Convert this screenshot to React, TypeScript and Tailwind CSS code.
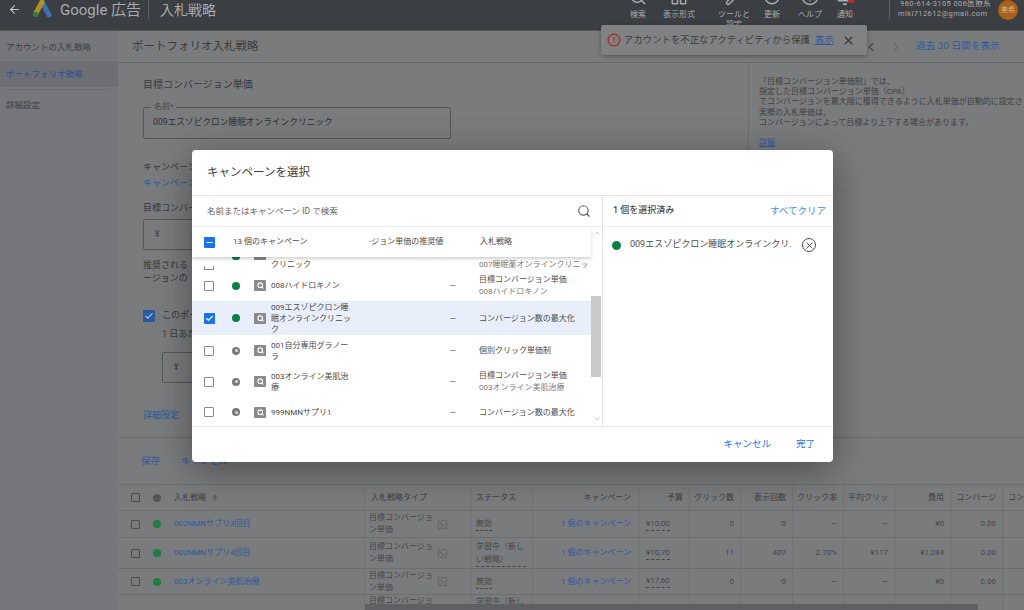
import React from 'react';
import { ArrowLeft, ArrowUp, ChevronLeft, ChevronRight, CircleAlert, CircleHelp, Bell, RotateCw, Search, Wrench, X, Check, Minus, ImageOff, LayoutPanelTop, ChevronUp, ChevronDown } from 'lucide-react';

const tableCols = 'grid grid-cols-[247px_106px_62px_106px_51px_51px_52px_51px_51px_56px_52px_21px]';
const cell = 'border-r border-[#707173] flex items-center';
const numCell = cell + ' justify-end pr-[6px]';

const headerItems = [
  { label: '検索', icon: <Search size={18} />, w: 'w-[36px]' },
  { label: '表示形式', icon: <LayoutPanelTop size={18} />, w: 'w-[46px]' },
  { label: 'ツールと設定', icon: <Wrench size={18} />, w: 'w-[36px] ml-[14px]' },
  { label: '更新', icon: <RotateCw size={18} />, w: 'w-[36px] ml-[2px]' },
  { label: 'ヘルプ', icon: <CircleHelp size={18} />, w: 'w-[40px]' },
  { label: '通知', icon: <Bell size={18} />, w: 'w-[30px]', badge: true },
];

const bidRows = [
  { name: '002NMNサプリ3回目', status: '無効', budget: '¥10,00', clicks: '0', imp: '0', ctr: '—', avg: '—', cost: '¥0', h: 'h-[27px]' },
  { name: '002NMNサプリ4回目', status: '学習中（新しい戦略）', budget: '¥10,70', clicks: '11', imp: '407', ctr: '2.70%', avg: '¥117', cost: '¥1,284', h: 'h-[31px]' },
  { name: '003オンライン美肌治療', status: '無効', budget: '¥17,60', clicks: '0', imp: '0', ctr: '—', avg: '—', cost: '¥0', h: 'h-[26px]' },
];

const campaignRows = [
  { name: '008ハイドロキノン', strategy: '目標コンバージョン単価', sub: '008ハイドロキノン', live: true, h: 'h-[31px]' },
  { name: '009エスゾピクロン睡眠オンラインクリニック', strategy: 'コンバージョン数の最大化', selected: true, live: true, h: 'h-[34px]' },
  { name: '001自分専用グラノーラ', strategy: '個別クリック単価制', live: false, h: 'h-[31px]' },
  { name: '003オンライン美肌治療', strategy: '目標コンバージョン単価', sub: '003オンライン美肌治療', live: false, h: 'h-[31px]' },
  { name: '999NMNサプリ1', strategy: 'コンバージョン数の最大化', live: false, h: 'h-[30px]' },
];

const StatusDot = ({ live }: { live: boolean }) =>
  live ? (
    <span className="block w-[8px] h-[8px] rounded-full bg-[#0b8043] shrink-0" />
  ) : (
    <span className="w-[8px] h-[8px] rounded-full bg-[#7a7a7a] shrink-0 flex items-center justify-center">
      <span className="w-[3px] h-[3px] rounded-full bg-[#d8d8d8]" />
    </span>
  );

const SearchBadge = () => (
  <span className="w-[12px] h-[11px] rounded-[1px] bg-[#8a8a8a] flex items-center justify-center shrink-0">
    <Search size={7} strokeWidth={3.5} className="text-white" />
  </span>
);

const CampaignRow = ({ row }: { row: (typeof campaignRows)[number] }) => (
  <div className={`${row.h} shrink-0 w-[399px] flex items-center text-[8px] leading-[11px] text-[#4a4a4a] ${row.selected ? 'bg-[#e8eefa]' : ''}`}>
    <div className="w-[34px] pl-[12px] shrink-0">
      {row.selected ? (
        <span className="w-[11px] h-[11px] rounded-[1px] bg-[#1a73e8] flex items-center justify-center">
          <Check size={9} strokeWidth={3} className="text-white" />
        </span>
      ) : (
        <span className="block w-[10px] h-[10px] rounded-[1px] border border-[#8a8a8a]" />
      )}
    </div>
    <div className="w-[28px] pl-[6px] shrink-0"><StatusDot live={row.live} /></div>
    <SearchBadge />
    <div className="w-[82px] ml-[5px] shrink-0">{row.name}</div>
    <div className="w-[126px] pr-[23px] shrink-0 text-right">—</div>
    <div className="flex-1 whitespace-nowrap">
      <div>{row.strategy}</div>
      {row.sub && <div className="text-[#7a7a7a] mt-[1px]">{row.sub}</div>}
    </div>
  </div>
);

const App: React.FC = () => {
  return (
    <div className="relative w-[1024px] h-[610px] overflow-hidden flex flex-col bg-[#7a7b7d] text-[#38393b] [font-family:Roboto,'Noto_Sans_CJK_JP',sans-serif]">
      {/* top bar */}
      <header className="h-[31px] shrink-0 bg-[#3b3e43] border-b border-[#55575a] flex items-start overflow-hidden text-[#a9abae]">
        <ArrowLeft size={13} className="ml-[8px] mt-[3px] text-[#c4c5c7]" />
        <svg width="20" height="18" viewBox="0 0 20 18" className="ml-[11px] mt-0">
          <path d="M10 2 L17 15" stroke="#3f6fb0" strokeWidth="5" strokeLinecap="round" />
          <path d="M10 2 L4 13" stroke="#b08f24" strokeWidth="5" strokeLinecap="round" />
          <circle cx="3.5" cy="14.5" r="2.8" fill="#2f7d45" />
        </svg>
        <span className="ml-[8px] mt-[1px] text-[15px] leading-[18px] whitespace-nowrap">Google 広告</span>
        <span className="ml-[7px] w-px h-[20px] bg-[#5c5e62]" />
        <span className="ml-[11px] mt-[1px] text-[14px] leading-[18px] whitespace-nowrap">入札戦略</span>
        <div className="ml-[404px] flex items-start">
          {headerItems.map((item) => (
            <div key={item.label} className={`${item.w} relative flex flex-col items-center text-center text-[8px] leading-[10px]`}>
              <span className="-mt-[12px] mb-[4px] text-[#a9abae]">{item.icon}</span>
              <span>{item.label}</span>
              {item.badge && <span className="absolute top-0 left-[18px] w-[7px] h-[3px] rounded-b-full bg-[#a8322c]" />}
            </div>
          ))}
        </div>
        <span className="ml-[29px] w-px h-[20px] bg-[#5c5e62]" />
        <div className="ml-[8px] mt-[-1px] text-[7.5px] leading-[10px] tracking-[0.4px] whitespace-nowrap">
          <div className="ml-[2px]">960-614-3105 006医療系</div>
          <div>miki712612@gmail.com</div>
        </div>
        <span className="ml-[7px] w-[20px] h-[20px] rounded-full bg-[#a8621c] text-[#d8b894] text-[7px] flex items-center justify-center shrink-0">美希</span>
      </header>

      <div className="flex flex-1 min-h-0">
        {/* side nav */}
        <aside className="w-[118px] shrink-0 bg-[#75777b] text-[8.5px] pt-[7px]">
          <div className="h-[19px] pl-[6px] flex items-center text-[#3f4042] whitespace-nowrap">アカウントの入札戦略</div>
          <div className="h-[26px] mt-[4px] pl-[6px] flex items-center bg-[#6d6f74] text-[#2a4f8f] whitespace-nowrap">ポートフォリオ戦略</div>
          <div className="mx-[8px] mt-[2px] h-px bg-[#6d6f72]" />
          <div className="h-[30px] pl-[6px] flex items-center text-[#3f4042]">詳細設定</div>
        </aside>

        {/* main */}
        <main className="flex-1 min-w-0 flex flex-col">
          <div className="h-[32px] shrink-0 border-b border-[#66676a] pl-[14px] flex items-center justify-between">
            <span className="text-[11.5px] text-[#3a3b3d] whitespace-nowrap">ポートフォリオ入札戦略</span>
            <div className="flex items-center text-[#45464a] pr-[24px]">
              <ChevronLeft size={14} />
              <ChevronRight size={14} className="ml-[11px] text-[#66686b]" />
              <span className="ml-[13px] text-[9.5px] tracking-[0.2px] text-[#2b5aa0] whitespace-nowrap">過去 30 日間を表示</span>
            </div>
          </div>

          <div className="h-[375px] shrink-0 flex border-b border-[#6c6d70]">
            <div className="w-[630px] shrink-0 pl-[25px] pt-[15px] text-[9px] overflow-hidden">
              <div className="text-[10px] leading-[14px] whitespace-nowrap">目標コンバージョン単価</div>
              <div className="relative mt-[15px] w-[308px] h-[32px] rounded-[2px] border border-[#55565a] flex items-center pl-[9px] text-[8.7px] text-[#2e2f31] whitespace-nowrap">
                009エスゾピクロン睡眠オンラインクリニック
                <span className="absolute -top-[6px] left-[7px] px-[3px] bg-[#7a7b7d] text-[8px] leading-[10px] text-[#48494b]">名前*</span>
              </div>
              <div className="mt-[20px] leading-[16px] whitespace-nowrap">キャンペーン</div>
              <div className="text-[#2b5aa0] leading-[16px] whitespace-nowrap">キャンペーン</div>
              <div className="mt-[10px] leading-[14px] whitespace-nowrap">目標コンバー</div>
              <div className="mt-[4px] w-[120px] h-[31px] rounded-[2px] border border-[#55565a] flex items-center pl-[11px] text-[8.5px]">¥</div>
              <div className="mt-[9px] leading-[13px] whitespace-nowrap">
                <div>推奨される</div>
                <div>ージョンの</div>
              </div>
              <div className="mt-[24px] flex items-center">
                <span className="w-[12px] h-[12px] bg-[#2b5aa0] flex items-center justify-center">
                  <Check size={10} strokeWidth={2.5} className="text-[#c4d2e8]" />
                </span>
                <span className="ml-[7px] whitespace-nowrap">このポート</span>
              </div>
              <div className="ml-[19px] mt-[4px] leading-[14px] whitespace-nowrap">1 日あた</div>
              <div className="ml-[19px] mt-[11px] w-[120px] h-[31px] rounded-[2px] border border-[#55565a] flex items-center pl-[11px] text-[8.5px]">¥</div>
              <div className="mt-[26px] text-[#2b5aa0] whitespace-nowrap">詳細設定</div>
            </div>
            <div className="flex-1 min-w-0 border-l border-[#6c6d70] pl-[10px] pt-[14px] text-[8px] leading-[10.2px] whitespace-nowrap overflow-hidden text-[#3f4042]">
              <div>「目標コンバージョン単価制」では、</div>
              <div>指定した目標コンバージョン単価（CPA）</div>
              <div>でコンバージョンを最大限に獲得できるように入札単価が自動的に設定さ</div>
              <div>実際の入札単価は、</div>
              <div>コンバージョンによって目標より上下する場合があります。</div>
              <div className="mt-[10px] text-[#2b5aa0] underline">詳細</div>
            </div>
          </div>

          <div className="h-[46px] shrink-0 pl-[23px] flex items-center text-[9.5px] text-[#2b5aa0]">
            <span>保存</span>
            <span className="ml-[21px]">キャンセル</span>
          </div>

          {/* table */}
          <div className="flex-1 min-h-0 overflow-hidden border-t border-[#6c6d70] text-[8px]">
            <div className={`${tableCols} h-[26px] border-b border-[#6c6d70] text-[#3f4042]`}>
              <div className={`${cell} pl-[13px]`}>
                <span className="w-[9px] h-[9px] border border-[#4b4c4f] rounded-[1px]" />
                <span className="ml-[13px] w-[8px] h-[8px] rounded-full bg-[#55565b]" />
                <span className="ml-[13px]">入札戦略</span>
                <ArrowUp size={8} className="ml-[5px]" />
              </div>
              <div className={`${cell} pl-[6px]`}>入札戦略タイプ</div>
              <div className={`${cell} pl-[5px] whitespace-nowrap overflow-hidden`}>ステータス</div>
              <div className={`${cell} justify-end pr-[7px]`}>キャンペーン</div>
              <div className={numCell}>予算</div>
              <div className={numCell}>クリック数</div>
              <div className={numCell}>表示回数</div>
              <div className={numCell}>クリック率</div>
              <div className={numCell}>平均クリッ</div>
              <div className={numCell}>費用</div>
              <div className={`${numCell} whitespace-nowrap`}>コンバージ</div>
              <div className="flex items-center pl-[5px] overflow-hidden whitespace-nowrap">コン</div>
            </div>
            {bidRows.map((row) => (
              <div key={row.name} className={`${tableCols} ${row.h} border-b border-[#6c6d70] text-[#45464a]`}>
                <div className={`${cell} pl-[13px]`}>
                  <span className="w-[9px] h-[9px] border border-[#4b4c4f] rounded-[1px]" />
                  <span className="ml-[13px] w-[8px] h-[8px] rounded-full bg-[#1f7a45]" />
                  <span className="ml-[13px] text-[#2b5aa0] whitespace-nowrap">{row.name}</span>
                </div>
                <div className={`${cell} pl-[4px] leading-[12px]`}>
                  <span className="w-[65px] shrink-0">目標コンバージョン単価</span>
                  <ImageOff size={11} className="ml-[3px] text-[#626366]" />
                </div>
                <div className={`${cell} pl-[5px] pr-[6px] leading-[13px] overflow-hidden`}>
                  <span className="border-b border-dashed border-[#45464a] [overflow-wrap:anywhere]">{row.status}</span>
                </div>
                <div className={`${cell} justify-end pr-[7px] text-[#2b5aa0] whitespace-nowrap`}>1 個のキャンペーン</div>
                <div className={`${cell} pl-[7px]`}>
                  <span className="border-b border-dashed border-[#45464a]">{row.budget}</span>
                </div>
                <div className={numCell}>{row.clicks}</div>
                <div className={numCell}>{row.imp}</div>
                <div className={numCell}>{row.ctr}</div>
                <div className={numCell}>{row.avg}</div>
                <div className={numCell}>{row.cost}</div>
                <div className={numCell}>0.00</div>
                <div />
              </div>
            ))}
            <div className={`${tableCols} h-[30px] text-[#45464a]`}>
              <div className={cell} />
              <div className={`${cell} pl-[4px] items-start leading-[12px]`}><span className="w-[65px]">目標コンバージョン単価</span></div>
              <div className={`${cell} pl-[5px] pr-[6px] items-start leading-[13px]`}>学習中（新しい戦略）</div>
              <div className={cell} />
              <div className={cell} />
              <div className={cell} />
              <div className={cell} />
              <div className={cell} />
              <div className={cell} />
              <div className={cell} />
              <div className={cell} />
            </div>
          </div>
        </main>
      </div>

      {/* horizontal table scrollbar */}
      <div className="absolute left-[365px] bottom-0 w-[613px] h-[6px] bg-[#5f6063]" />

      {/* account protection toast */}
      <div className="absolute left-[601px] top-[25px] w-[266px] h-[30px] rounded-[2px] bg-[#808183] shadow-[0_1px_4px_rgba(0,0,0,0.35)] flex items-center pl-[6px] text-[9.4px] text-[#3a3b3d] whitespace-nowrap">
        <CircleAlert size={14} strokeWidth={2.3} className="text-[#a32c27] shrink-0" />
        <span className="ml-[3px]">アカウントを不正なアクティビティから保護</span>
        <span className="ml-[5px] text-[#2b5aa0] underline">表示</span>
        <X size={13} strokeWidth={2.6} className="ml-[8px] text-[#3a3b3d]" />
      </div>

      {/* dialog */}
      <div className="absolute left-[192px] top-[150px] w-[641px] h-[312px] rounded-[4px] bg-white text-[#4a4a4a] flex flex-col shadow-[0_8px_36px_rgba(0,0,0,0.38)]">
        <div className="h-[46px] shrink-0 border-b border-[#e4e4e4] flex items-center pl-[15px] text-[11.5px] text-[#3c4043]">キャンペーンを選択</div>
        <div className="flex-1 min-h-0 flex border-b border-[#e4e4e4]">
          <div className="relative w-[411px] shrink-0 border-r border-[#e4e4e4] flex flex-col">
            <div className="h-[31px] shrink-0 border-b border-[#ececec] flex items-center justify-between pl-[15px] pr-[11px] text-[8.5px] text-[#5f6368]">
              <span>名前またはキャンペーン ID で検索</span>
              <Search size={14} className="text-[#5f6368]" />
            </div>
            <div className="relative z-10 h-[30px] shrink-0 w-[399px] bg-white shadow-[0_2px_3px_rgba(0,0,0,0.18)] flex items-center text-[8px] text-[#4a4a4a]">
              <div className="w-[41px] pl-[12px] shrink-0">
                <span className="w-[11px] h-[11px] rounded-[1px] bg-[#1a73e8] flex items-center justify-center">
                  <Minus size={9} strokeWidth={3} className="text-white" />
                </span>
              </div>
              <span className="w-[136px] shrink-0">13 個のキャンペーン</span>
              <span className="w-[111px] shrink-0 whitespace-nowrap">-ジョン単価の推奨値</span>
              <span>入札戦略</span>
            </div>
            <div className="flex-1 min-h-0 overflow-hidden flex flex-col">
              <div className="h-[13px] shrink-0 w-[399px] overflow-hidden flex items-end text-[8px] leading-[11px]">
                <div className="w-[34px] pl-[12px] shrink-0"><span className="block w-[10px] h-[4px] border border-t-0 border-[#8a8a8a]" /></div>
                <div className="w-[28px] pl-[6px] shrink-0 self-start"><span className="block w-[8px] h-[3px] rounded-b-full bg-[#0b8043]" /></div>
                <div className="w-[12px] h-[3px] bg-[#8a8a8a] self-start shrink-0" />
                <div className="w-[82px] ml-[5px] shrink-0">クリニック</div>
                <div className="w-[126px] shrink-0" />
                <div className="text-[#7a7a7a] whitespace-nowrap">007睡眠薬オンラインクリニッ</div>
              </div>
              {campaignRows.map((row) => (
                <CampaignRow key={row.name} row={row} />
              ))}
            </div>
            {/* list scrollbar */}
            <div className="absolute right-0 top-[31px] bottom-0 w-[11px] flex flex-col items-center text-[#d0d0d0]">
              <ChevronUp size={8} strokeWidth={3} className="mt-[2px]" />
            </div>
            <div className="absolute right-[1px] top-[100px] w-[10px] h-[81px] bg-[#c9c9c9]" />
            <ChevronDown size={8} strokeWidth={3} className="absolute right-[1px] bottom-[3px] text-[#d0d0d0]" />
          </div>
          <div className="flex-1 min-w-0 flex flex-col">
            <div className="h-[31px] shrink-0 border-b border-[#ececec] flex items-center justify-between pl-[10px] pr-[7px]">
              <span className="text-[9px] font-medium text-[#4a4a4a]">1 個を選択済み</span>
              <span className="text-[9.5px] text-[#4a86e8]">すべてクリア</span>
            </div>
            <div className="h-[36px] flex items-center pl-[9px] text-[9px]">
              <span className="w-[9px] h-[9px] rounded-full bg-[#0b8043] shrink-0" />
              <span className="ml-[9px] w-[167px] overflow-hidden whitespace-nowrap">009エスゾピクロン睡眠オンラインクリ.</span>
              <span className="ml-[5px] w-[14px] h-[14px] rounded-full border border-[#4a4a4a] flex items-center justify-center shrink-0">
                <X size={11} strokeWidth={2} className="text-[#4a4a4a]" />
              </span>
            </div>
          </div>
        </div>
        <div className="h-[35px] shrink-0 flex items-center justify-end pr-[18px] text-[9.5px] text-[#1a73e8]">
          <span>キャンセル</span>
          <span className="ml-[25px]">完了</span>
        </div>
      </div>
    </div>
  );
};

export default App;
